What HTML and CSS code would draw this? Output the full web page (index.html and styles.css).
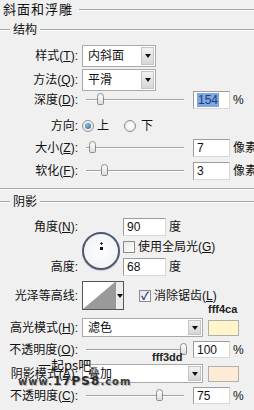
FILE: index.html
```html
<!DOCTYPE html>
<html lang="zh">
<head>
  <meta charset="UTF-8">
  <title>斜面和浮雕</title>
  <link rel="stylesheet" href="styles.css">
</head>
<body>

  <div class="panel">
    <div class="head"><span class="head-text">斜面和浮雕</span><i class="rule"></i></div>

    <div class="group-head"><i class="rule lead"></i><span class="legend">结构</span><i class="rule"></i></div>

    <div class="row r-sel1">
      <span class="lbl">样式(<u>T</u>):</span>
      <div class="select narrow"><span class="val">内斜面</span><b class="drop"><i></i></b></div>
    </div>
    <div class="row r-sel2">
      <span class="lbl">方法(<u>Q</u>):</span>
      <div class="select narrow"><span class="val">平滑</span><b class="drop"><i></i></b></div>
    </div>
    <div class="row r-depth">
      <span class="lbl">深度(<u>D</u>):</span>
      <div class="slider"><i class="track"></i><i class="thumb" style="left: 11px"></i></div>
      <span class="num"><span class="sel">154</span></span>
      <span class="unit">%</span>
    </div>
    <div class="row r-dir">
      <span class="lbl">方向:</span>
      <span class="radio on"></span><span class="opt first">上</span>
      <span class="radio"></span><span class="opt second">下</span>
    </div>
    <div class="row r-size">
      <span class="lbl">大小(<u>Z</u>):</span>
      <div class="slider"><i class="track"></i><i class="thumb" style="left: 3px"></i></div>
      <span class="num">7</span>
      <span class="unit">像素</span>
    </div>
    <div class="row r-soft">
      <span class="lbl">软化(<u>F</u>):</span>
      <div class="slider"><i class="track"></i><i class="thumb" style="left: 15px"></i></div>
      <span class="num">3</span>
      <span class="unit">像素</span>
    </div>

    <div class="group-end"></div>

    <div class="group-head g2"><i class="rule lead"></i><span class="legend">阴影</span><i class="rule"></i></div>

    <div class="angle">
      <span class="lbl a-top">角度(<u>N</u>):</span>
      <span class="lbl a-bot">高度:</span>
      <div class="dial-cell">
        <div class="dial"><i class="cross"></i><i class="dot"></i></div>
      </div>
      <div class="a-row a1"><span class="num wide">90</span><span class="unit">度</span></div>
      <div class="a-row a2"><span class="check"></span><span class="opt">使用全局光(<u>G</u>)</span></div>
      <div class="a-row a3"><span class="num wide">68</span><span class="unit">度</span></div>
    </div>

    <div class="row r-contour">
      <span class="lbl">光泽等高线:</span>
      <div class="contour">
        <svg width="32" height="27" viewBox="0 0 32 27"><polygon points="0,27 32,0 32,27" fill="#9a9a9a"/></svg>
        <b class="drop flat"><i></i></b>
      </div>
      <span class="check on">✓</span><span class="opt">消除锯齿(<u>L</u>)</span>
    </div>

    <div class="row r-mode1">
      <span class="lbl">高光模式(<u>H</u>):</span>
      <div class="select wide-sel"><span class="val">滤色</span><b class="drop"><i></i></b></div>
      <span class="swatch s1"></span>
    </div>
    <div class="row r-op1">
      <span class="lbl">不透明度(<u>O</u>):</span>
      <div class="slider"><i class="track"></i><i class="thumb" style="left: 94px"></i></div>
      <span class="num">100</span>
      <span class="unit">%</span>
    </div>
    <div class="row r-mode2">
      <span class="lbl">阴影模式(<u>A</u>):</span>
      <div class="select wide-sel"><span class="val">叠加</span><b class="drop"><i></i></b></div>
      <span class="swatch s2"></span>
    </div>
    <div class="row r-op2">
      <span class="lbl">不透明度(<u>C</u>):</span>
      <div class="slider"><i class="track"></i><i class="thumb" style="left: 70px"></i></div>
      <span class="num">75</span>
      <span class="unit">%</span>
    </div>
  </div>

  <!-- notes and watermark pasted over the screenshot -->
  <span class="note n1">fff4ca</span>
  <span class="note n2">fff3dd</span>
  <div class="mark">
    <span class="mark-cn">一起ps吧</span>
    <span class="mark-url">www.<b>17PS8</b>.com</span>
  </div>

</body>
</html>
```

FILE: styles.css
```css
body {
  margin: 0;
  width: 254px;
  height: 410px;
  overflow: hidden;
  position: relative;
  background-color: #f0f0f0;
  font-family: "Liberation Sans", "Noto Sans CJK SC", sans-serif;
  font-size: 12px;
  line-height: 14px;
  color: #111;
}
u {
  text-decoration: underline;
  text-underline-offset: 1px;
}
.panel {
  display: flex;
  flex-direction: column;
}
.rule {
  flex: 1;
  height: 0;
  border-top: 1px solid #a6a6a6;
  border-bottom: 1px solid #fff;
}
.head {
  height: 19px;
  display: flex;
  align-items: center;
}
.head-text {
  font-size: 13px;
  letter-spacing: 1px;
  margin-left: 3px;
  margin-right: 6px;
}
.group-head {
  height: 21px;
  display: flex;
  align-items: center;
}
.group-head.g2 {
  height: 24px;
}
.rule.lead {
  flex: none;
  width: 10px;
}
.legend {
  margin: 0 3px;
}
.group-end {
  margin-top: 8px;
  height: 0;
  border-top: 1px solid #a6a6a6;
  border-bottom: 1px solid #fff;
}

.row {
  display: flex;
  align-items: center;
}
.lbl {
  flex: none;
  width: 78px;
  margin-right: 4px;
  text-align: right;
  white-space: nowrap;
}
.r-sel1 { margin-top: 5px; height: 22px; }
.r-sel2 { margin-top: 2px; height: 22px; }
.r-depth { height: 18px; }
.r-dir { margin-top: 8px; height: 18px; }
.r-size { margin-top: 4px; height: 18px; }
.r-soft { margin-top: 5px; height: 18px; }
.r-contour { margin-top: 5px; height: 29px; }
.r-mode1 { margin-top: 8px; height: 19px; }
.r-op1 { margin-top: 4px; height: 17px; }
.r-mode2 { margin-top: 6px; height: 19px; }
.r-op2 { margin-top: 4px; height: 17px; }

.select {
  box-sizing: border-box;
  height: 100%;
  display: flex;
  align-items: stretch;
  background-color: #fff;
  border: 1px solid #a9a9a9;
}
.select.narrow { width: 74px; }
.select.wide-sel { width: 121px; }
.val {
  flex: 1;
  padding-left: 5px;
  display: flex;
  align-items: center;
}
.drop {
  flex: none;
  width: 13px;
  margin: 1px;
  display: flex;
  align-items: center;
  justify-content: center;
  background: linear-gradient(#f2f2f2, #d6d6d6);
  border: 1px solid #c4c4c4;
  box-sizing: border-box;
}
.drop i {
  width: 0;
  height: 0;
  border-left: 3px solid transparent;
  border-right: 3px solid transparent;
  border-top: 4px solid #111;
}
.drop.flat {
  margin: 0;
  width: 8px;
  border: none;
  border-left: 1px solid #999;
  background: #ececec;
}

.slider {
  position: relative;
  flex: none;
  width: 98px;
  height: 14px;
  margin-left: 4px;
  margin-right: 9px;
}
.track {
  position: absolute;
  left: 0;
  right: 0;
  top: 6px;
  border-top: 1px solid #a0a0a0;
  border-bottom: 1px solid #fff;
}
.thumb {
  position: absolute;
  top: 0;
  width: 7px;
  height: 12px;
  box-sizing: border-box;
  border: 1px solid #8c8c8c;
  border-radius: 4px 4px 2px 2px;
  background: linear-gradient(#ffffff, #dcdcdc);
}

.num {
  box-sizing: border-box;
  flex: none;
  width: 37px;
  height: 100%;
  padding-left: 3px;
  display: flex;
  align-items: center;
  background-color: #fff;
  border: 1px solid #9c9c9c;
  border-right-color: #d8d8d8;
  border-bottom-color: #d8d8d8;
  font-family: "Liberation Sans", sans-serif;
  font-size: 12px;
}
.num.wide { width: 43px; }
.sel {
  background-color: #7fa6de;
  color: #1f3c78;
  padding: 0 1px;
}
.unit {
  margin-left: 3px;
  white-space: nowrap;
}

.radio {
  flex: none;
  width: 12px;
  height: 12px;
  box-sizing: border-box;
  border: 1px solid #8a8f98;
  border-radius: 50%;
  background: radial-gradient(#ffffff, #e4e4e4);
  position: relative;
}
.radio.on::after {
  content: "";
  position: absolute;
  left: 2px;
  top: 2px;
  width: 6px;
  height: 6px;
  border-radius: 50%;
  background: radial-gradient(circle at 40% 35%, #8fc0e0, #1e5d86);
}
.opt {
  margin-left: 3px;
  white-space: nowrap;
}
.opt.first {
  flex: none;
  width: 27px;
}
.opt.second {
  margin-left: 5px;
}

.angle {
  margin-top: 4px;
  display: grid;
  grid-template-columns: 82px 41px 1fr;
  grid-template-rows: 18px 22px 18px;
}
.a-top { grid-column: 1; grid-row: 1; align-self: center; }
.a-bot { grid-column: 1; grid-row: 3; align-self: center; }
.dial-cell {
  grid-column: 2;
  grid-row: 1 / 4;
  padding-top: 14px;
}
.dial {
  position: relative;
  width: 38px;
  height: 38px;
  box-sizing: border-box;
  border: 2px solid #50586c;
  border-radius: 50%;
  background: radial-gradient(#ffffff, #eceef4);
  box-shadow: 0 1px 1px rgba(0,0,0,0.15);
}
.cross {
  position: absolute;
  left: 16px;
  top: 8px;
  width: 3px;
  height: 3px;
  background:
    linear-gradient(#333, #333) center / 1px 3px no-repeat,
    linear-gradient(#333, #333) center / 3px 1px no-repeat;
}
.dot {
  position: absolute;
  left: 16px;
  top: 13px;
  width: 3px;
  height: 3px;
  background-color: #111;
}
.a-row {
  grid-column: 3;
  display: flex;
  align-items: center;
}
.a1 { grid-row: 1; }
.a2 { grid-row: 2; }
.a3 { grid-row: 3; }

.check {
  flex: none;
  width: 12px;
  height: 12px;
  box-sizing: border-box;
  border: 1px solid #8a8a8a;
  background: linear-gradient(135deg, #e6e6e6, #ffffff);
  font-size: 11px;
  line-height: 10px;
  text-align: center;
  color: #2a3f8a;
  font-weight: bold;
}
.check.on {
  margin-left: 15px;
}

.contour {
  flex: none;
  box-sizing: border-box;
  width: 42px;
  height: 29px;
  display: flex;
  background-color: #fff;
  border: 1px solid #555;
}
.contour svg {
  display: block;
}

.swatch {
  flex: none;
  width: 31px;
  height: 16px;
  margin-left: 5px;
  box-sizing: border-box;
  border: 1px solid #b0b0b0;
}
.s1 { background-color: #fff4ca; }
.s2 { background-color: #fdebd6; }

.note {
  position: absolute;
  font-family: "Liberation Sans", sans-serif;
  font-size: 11px;
  font-weight: bold;
  line-height: 11px;
  color: #222;
}
.n1 { left: 208px; top: 304px; }
.n2 { left: 152px; top: 352px; }

.mark {
  position: absolute;
  left: 18px;
  top: 357px;
  width: 110px;
}
.mark-cn {
  display: block;
  margin-left: 20px;
  font-family: "Noto Sans CJK SC", sans-serif;
  font-size: 13px;
  line-height: 15px;
  color: #111;
}
.mark-url {
  display: block;
  margin-top: 4px;
  font-family: "DejaVu Sans", sans-serif;
  font-size: 10px;
  font-weight: bold;
  line-height: 11px;
  letter-spacing: 1px;
  color: #3a3a3a;
  text-shadow: 1px 1px 0 #bbb;
}
.mark-url b {
  font-size: 12px;
  color: #2a2a2a;
}
```
